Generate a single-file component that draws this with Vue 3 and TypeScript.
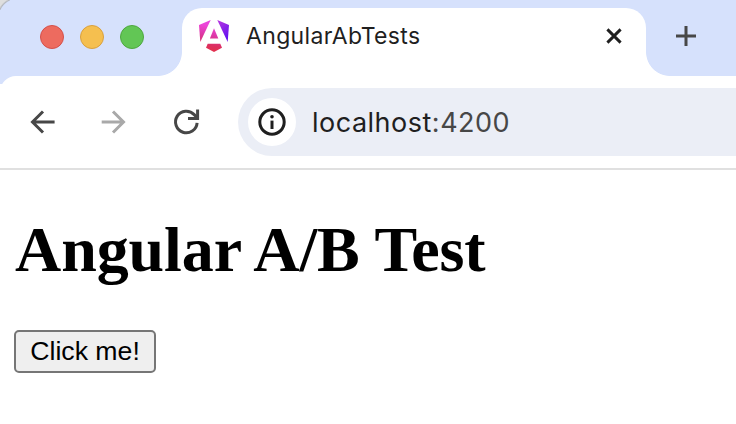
<script setup lang="ts">
import { ref } from 'vue'

interface WindowControl {
  name: string
}

const controls: WindowControl[] = [{ name: 'close' }, { name: 'minimize' }, { name: 'zoom' }]
const title = ref('AngularAbTests')
const host = ref('localhost')
const port = ref(':4200')
</script>

<template>
  <div class="window">
    <header class="strip">
      <div class="controls">
        <span v-for="c in controls" :key="c.name" class="dot" :class="c.name"></span>
      </div>
      <div class="tab">
        <svg class="favicon" width="32" height="34" viewBox="198 19 32 34">
          <defs>
            <linearGradient id="ng-warm" gradientUnits="userSpaceOnUse" x1="207" y1="51" x2="213" y2="20">
              <stop offset="0" stop-color="#e4304a" />
              <stop offset="0.2" stop-color="#dc2f60" />
              <stop offset="0.5" stop-color="#dc38a4" />
              <stop offset="0.8" stop-color="#ee44d8" />
              <stop offset="1" stop-color="#e044e0" />
            </linearGradient>
            <linearGradient id="ng-cool" gradientUnits="userSpaceOnUse" x1="217" y1="22" x2="229" y2="36">
              <stop offset="0" stop-color="#b536e0" />
              <stop offset="1" stop-color="#6412f0" />
            </linearGradient>
          </defs>
          <path d="M199 25L210.7 20L200.3 42Z" fill="url(#ng-warm)" />
          <path d="M217.3 20L229 25L227.7 42Z" fill="url(#ng-cool)" />
          <path d="M214 28.3L218.3 38.4H209.9Z" fill="url(#ng-warm)" />
          <path d="M207.7 43.8H220.3L222 47.7L214 52L206 47.7Z" fill="url(#ng-warm)" />
        </svg>
        <span class="title">{{ title }}</span>
        <svg class="close-tab" width="18" height="18" viewBox="0 0 18 18">
          <path d="M2.4 2.4L15.6 15.6M15.6 2.4L2.4 15.6" stroke="#1f1f1f" stroke-width="2.9" />
        </svg>
      </div>
      <svg class="new-tab" width="20" height="20" viewBox="0 0 20 20">
        <path d="M0 10H20M10 0V20" stroke="#474747" stroke-width="3" />
      </svg>
    </header>

    <nav class="toolbar">
      <svg class="back" width="26" height="24" viewBox="0 0 26 24">
        <path d="M24.6 12H3M13 1.5L2.5 12L13 22.5" fill="none" stroke="#474747" stroke-width="3" />
      </svg>
      <svg class="forward" width="26" height="24" viewBox="0 0 26 24">
        <path d="M.7 12H22.5M12 1.5L22.5 12L12 22.5" fill="none" stroke="#a9a9a9" stroke-width="3" />
      </svg>
      <svg class="reload" width="28" height="28" viewBox="0 0 28 28">
        <path d="M25.1 14.8A10.8 10.8 0 1 1 22.2 6.6L25 9.6" fill="none" stroke="#474747" stroke-width="3" />
        <path d="M25.6 1.4V10.4H16" fill="none" stroke="#474747" stroke-width="3" />
      </svg>
      <div class="omnibox">
        <span class="site-info">
          <svg width="28" height="28" viewBox="0 0 28 28">
            <circle cx="14" cy="14" r="12.2" fill="none" stroke="#1f1f1f" stroke-width="3" />
            <circle cx="14" cy="8.8" r="1.8" fill="#1f1f1f" />
            <path d="M14 12.6V21" stroke="#1f1f1f" stroke-width="3" />
          </svg>
        </span>
        <span class="url">{{ host }}<span class="port">{{ port }}</span></span>
      </div>
    </nav>

    <main class="page">
      <h1>Angular A/B Test</h1>
      <button type="button">Click me!</button>
    </main>
  </div>
</template>

<style>
body {
  margin: 0;
  background: #fff;
}
</style>

<style scoped>
.window {
  width: 736px;
  height: 424px;
  overflow: hidden;
  background: #fff;
  box-sizing: border-box;
}
.strip {
  display: flex;
  height: 84px;
  margin-bottom: -8px;
  box-sizing: border-box;
  background: radial-gradient(circle at 17px 17px, #d6e1fc 17.5px, #b4b8bf 18.5px, #dedede 20px) 0 0 / 10px 10px no-repeat,
    linear-gradient(#d6e1fc, #d6e1fc);
}
.controls {
  display: flex;
  gap: 16px;
  width: 182px;
  padding: 25px 0 0 40px;
  box-sizing: border-box;
}
.dot {
  width: 24px;
  height: 24px;
  border-radius: 50%;
  box-sizing: border-box;
  border: 1px solid;
}
.dot.close {
  background: #ed6b5f;
  border-color: #d4504a;
}
.dot.minimize {
  background: #f5bf4f;
  border-color: #d9a03e;
}
.dot.zoom {
  background: #62c655;
  border-color: #4ea73f;
}
.tab {
  position: relative;
  display: flex;
  align-items: center;
  width: 464px;
  height: 68px;
  margin-top: 8px;
  padding: 0 23px 12px 16px;
  box-sizing: border-box;
  background: #fff;
  border-radius: 20px 20px 0 0;
}
.tab::before,
.tab::after {
  content: '';
  position: absolute;
  bottom: 0;
  width: 24px;
  height: 24px;
}
.tab::before {
  right: 100%;
  background: radial-gradient(circle at 0 0, transparent 23.5px, #fff 24.3px);
}
.tab::after {
  left: 100%;
  background: radial-gradient(circle at 100% 0, transparent 23.5px, #fff 24.3px);
}
.title {
  flex: 1;
  margin-left: 16px;
  font: 400 23px/28px Inter, 'Liberation Sans', sans-serif;
  letter-spacing: 0.35px;
  color: #1f1f1f;
  white-space: nowrap;
}
.new-tab {
  margin: 26px 0 0 30px;
}
.toolbar {
  position: relative;
  display: flex;
  align-items: center;
  height: 94px;
  padding: 0 0 0 30px;
  box-sizing: border-box;
  background: #fff;
  border-bottom: 2px solid #e0e0e0;
  border-top-left-radius: 16px;
}
.forward {
  margin-left: 45px;
}
.reload {
  margin-left: 45px;
}
.omnibox {
  display: flex;
  align-items: center;
  flex: 1;
  height: 68px;
  margin-left: 38px;
  padding-left: 10px;
  background: #ebeef6;
  border-radius: 34px 0 0 34px;
}
.site-info {
  display: flex;
  align-items: center;
  justify-content: center;
  width: 48px;
  height: 48px;
  border-radius: 50%;
  background: #fff;
}
.url {
  margin-left: 16px;
  padding-top: 2px;
  font: 400 27px/34px Inter, 'Liberation Sans', sans-serif;
  letter-spacing: 0.5px;
  color: #1f1f1f;
}
.port {
  color: #474747;
}
.page {
  padding: 43px 14px 0;
}
h1 {
  margin: 0 0 43px 1px;
  font: 700 64px/74px 'Liberation Serif', 'Times New Roman', serif;
  letter-spacing: -0.08px;
  color: #000;
}
button {
  display: block;
  width: 142px;
  height: 43px;
  padding: 0 0 2px;
  box-sizing: border-box;
  border: 2px solid #767676;
  border-radius: 5px;
  background: #efefef;
  font: 400 26.67px/36px 'Liberation Sans', Arial, sans-serif;
  color: #000;
}
</style>
